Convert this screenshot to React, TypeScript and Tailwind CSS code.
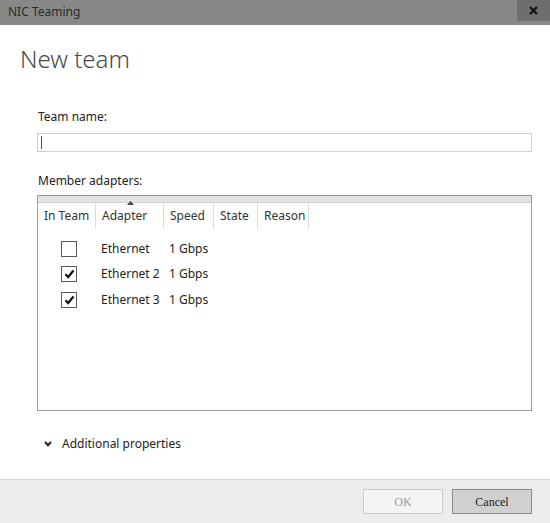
import React from "react";

const adapters = [
  { name: "Ethernet", speed: "1 Gbps", checked: false },
  { name: "Ethernet 2", speed: "1 Gbps", checked: true },
  { name: "Ethernet 3", speed: "1 Gbps", checked: true },
];

const columns = ["In Team", "Adapter", "Speed", "State", "Reason"];

function Checkbox({ checked }: { checked: boolean }) {
  return (
    <div className="w-[16px] h-[16px] border border-[#5a5a5a] bg-white flex items-center justify-center">
      {checked && (
        <svg width="11" height="10" viewBox="0 0 11 10">
          <path d="M1.5 5.2 L4.2 8 L9.5 1.5" fill="none" stroke="#111" strokeWidth="2.2" />
        </svg>
      )}
    </div>
  );
}

export default function App() {
  return (
    <div
      className="w-[550px] h-[523px] bg-white flex flex-col text-[#222] overflow-hidden"
      style={{ fontFamily: '"Noto Sans", "Open Sans", sans-serif' }}
    >
      {/* Title bar */}
      <div className="h-[25px] bg-[#888888] flex items-start shrink-0">
        <div className="pl-[8px] pt-[3px] text-[12px] text-[#2a2a2a]">NIC Teaming</div>
        <div className="ml-auto w-[33px] h-[21px] bg-[#6e6e6e] flex items-center justify-center">
          <svg width="9" height="9" viewBox="0 0 9 9">
            <path d="M1 1 L8 8 M8 1 L1 8" stroke="#111" strokeWidth="2.2" />
          </svg>
        </div>
      </div>

      {/* Content */}
      <div className="flex-1 flex flex-col">
        <h1 className="pl-[20px] pt-[18px] text-[24px] leading-[32px] font-light text-[#4a4a4a]">
          New team
        </h1>

        <div className="ml-[37px] w-[495px] mt-[34px]">
          <div className="pl-[1px] text-[12px] leading-[16px]">Team name:</div>
          <div className="mt-[8px] h-[19px] border border-[#cfcfcf] flex items-center pl-[3px]">
            <div className="w-px h-[13px] bg-[#555]" />
          </div>

          <div className="mt-[21px] pl-[1px] text-[12px] leading-[16px]">Member adapters:</div>
          <div className="mt-[6px] h-[216px] border border-[#9a9a9a] flex flex-col">
            <div className="h-[7px] bg-[#e4e4e4] border-b border-[#d0d0d0]" />
            <div className="grid grid-cols-[58px_68px_50px_44px_51px] h-[26px] text-[12px]">
              {columns.map((c) => (
                <div
                  key={c}
                  className="relative border-r border-[#dcdcdc] pl-[6px] flex items-center text-[#333]"
                >
                  {c === "Adapter" && (
                    <svg
                      className="absolute left-[31px] top-[-2px]"
                      width="7"
                      height="4"
                      viewBox="0 0 7 4"
                    >
                      <path d="M0 4 L3.5 0 L7 4 Z" fill="#444" />
                    </svg>
                  )}
                  {c}
                </div>
              ))}
            </div>
            <div className="pt-[7px] flex flex-col">
              {adapters.map((a) => (
                <div key={a.name} className="grid grid-cols-[58px_68px_50px] h-[25.5px] items-center text-[12px]">
                  <div className="pl-[23px]">
                    <Checkbox checked={a.checked} />
                  </div>
                  <div className="pl-[5px]">{a.name}</div>
                  <div className="pl-[5px]">{a.speed}</div>
                </div>
              ))}
            </div>
          </div>

          <div className="mt-[24px] flex items-center text-[12px] h-[18px]">
            <svg className="ml-[7px]" width="8" height="6" viewBox="0 0 8 6">
              <path d="M1 1 L4 4.2 L7 1" fill="none" stroke="#222" strokeWidth="2" />
            </svg>
            <span className="ml-[10px]">Additional properties</span>
          </div>
        </div>

        {/* Footer */}
        <div className="mt-auto h-[44px] bg-[#ececec] border-t border-[#d0d0d0] flex items-center justify-end pr-[18px] gap-[9px]">
          <button
            className="w-[80px] h-[25px] border border-[#cccccc] bg-[#f4f4f4] text-[#9a9a9a] text-[12px]"
            style={{ fontFamily: '"Liberation Serif", serif' }}
          >
            OK
          </button>
          <button
            className="w-[80px] h-[25px] border border-[#8a8a8a] bg-[#d0d0d0] text-[#222] text-[12px]"
            style={{ fontFamily: '"Liberation Serif", serif' }}
          >
            Cancel
          </button>
        </div>
      </div>
    </div>
  );
}
